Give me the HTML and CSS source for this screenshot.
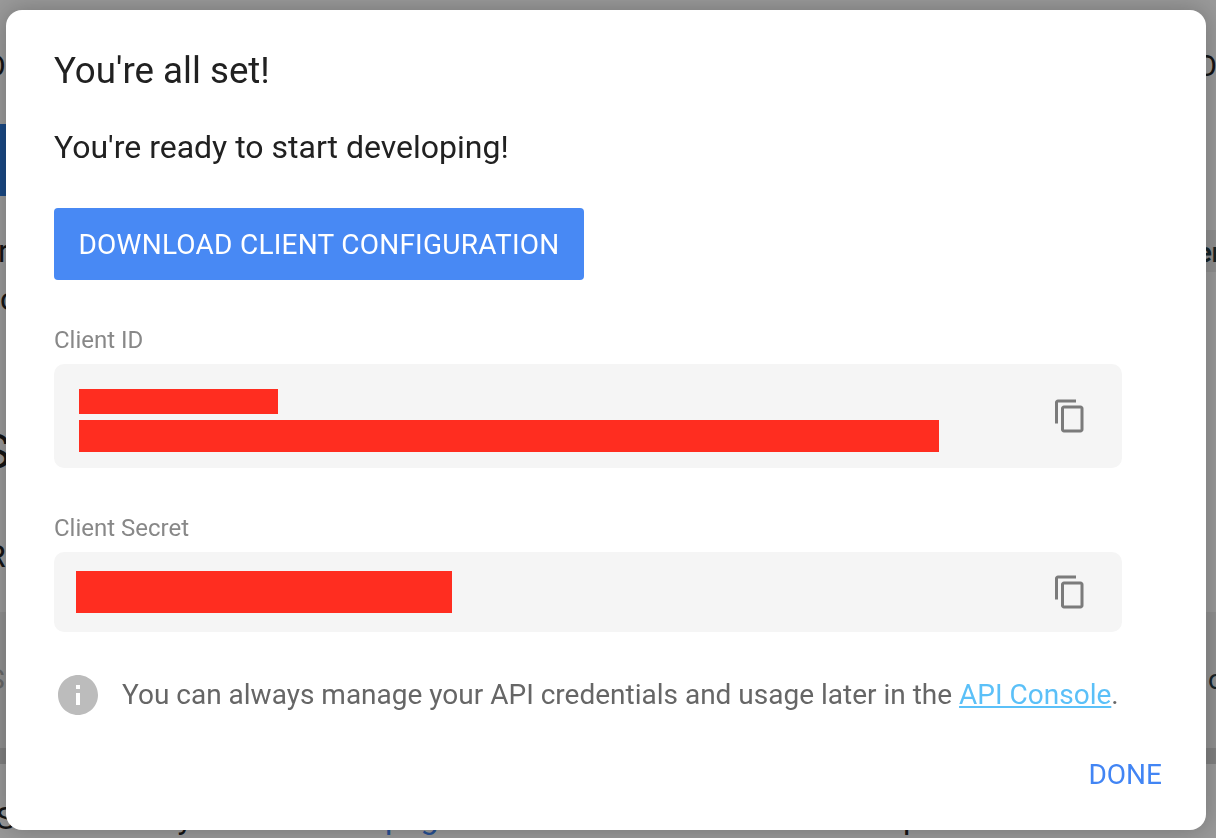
FILE: index.html
```html
<!DOCTYPE html>
<html lang="en">
<head>
<meta charset="utf-8">
<title>You're all set!</title>
<link rel="stylesheet" href="styles.css">
</head>
<body>
<div class="page">
  <div class="row row-top"><span>O</span><span>O</span></div>
  <div class="band"></div>
  <div class="row row-tab"><span>r</span><span class="chip">er</span></div>
  <div class="row row-small"><span>c</span></div>
  <div class="row row-big"><span>S</span></div>
  <div class="row row-r"><span>R</span></div>
  <div class="code">
    <div class="row row-code"><span class="faint">S</span><span class="strong">o</span></div>
    <div class="scrollbar"></div>
  </div>
  <div class="row-bottom"><span>Select the key</span><span class="link">page</span><span>provided</span></div>
</div>
<div class="overlay"></div>
<main class="modal">
  <h1 class="title">You're all set!</h1>
  <p class="subtitle">You're ready to start developing!</p>
  <button class="download">DOWNLOAD CLIENT CONFIGURATION</button>
  <div class="label">Client ID</div>
  <div class="field field-id">
    <div class="redactions">
      <div class="red red-a"></div>
      <div class="red red-b"></div>
    </div>
    <svg class="copy" viewBox="0 0 24 24"><path d="M16 1H4c-1.1 0-2 .9-2 2v14h2V3h12V1zm3 4H8c-1.1 0-2 .9-2 2v14c0 1.1.9 2 2 2h11c1.1 0 2-.9 2-2V7c0-1.1-.9-2-2-2zm0 16H8V7h11v14z"/></svg>
  </div>
  <div class="label">Client Secret</div>
  <div class="field field-secret">
    <div class="red red-c"></div>
    <svg class="copy" viewBox="0 0 24 24"><path d="M16 1H4c-1.1 0-2 .9-2 2v14h2V3h12V1zm3 4H8c-1.1 0-2 .9-2 2v14c0 1.1.9 2 2 2h11c1.1 0 2-.9 2-2V7c0-1.1-.9-2-2-2zm0 16H8V7h11v14z"/></svg>
  </div>
  <div class="note">
    <svg class="info" viewBox="0 0 24 24"><path d="M12 2C6.48 2 2 6.48 2 12s4.48 10 10 10 10-4.48 10-10S17.52 2 12 2zm1 15h-2v-6h2v6zm0-8h-2V7h2v2z"/></svg>
    <p>You can always manage your API credentials and usage later in the <a href="#">API Console</a>.</p>
  </div>
  <div class="actions"><span class="done">DONE</span></div>
</main>
</body>
</html>
```
FILE: styles.css
```css
* { box-sizing: border-box; }
html, body { margin: 0; height: 838px; overflow: hidden; font-family: Roboto, sans-serif; background: #fff; }
.page { height: 838px; overflow: hidden; color: #222; display: flex; flex-direction: column; }
.row { display: flex; justify-content: space-between; white-space: nowrap; flex: none; }
.row-top { height: 124px; font-size: 30px; line-height: 132px; margin: 0 -1px 0 -15px; }
.band { height: 72px; width: 300px; background: #2b79dc; flex: none; }
.row-tab { height: 48px; margin: 31px -16px 0 -2px; font-size: 32px; line-height: 48px; }
.chip { background: #eeeeee; font-weight: 700; color: #263a42; height: 42px; line-height: 45px; padding: 0 10px; margin-top: 3px; font-size: 28px; }
.row-small { height: 48px; font-size: 32px; line-height: 48px; }
.row-big { height: 60px; margin: 99px 0 0 -18px; font-size: 48px; line-height: 60px; }
.row-r { height: 48px; margin: 50px 0 0 -14px; font-size: 32px; line-height: 48px; }
.code { height: 152px; margin-top: 32px; background: #f1f1f1; display: flex; flex-direction: column; flex: none; }
.row-code { height: 40px; margin: 48px -8px 0 -12px; font-size: 28px; line-height: 40px; }
.faint { color: #aaa; }
.strong { color: #263a42; }
.scrollbar { height: 16px; margin-top: auto; background: #d5d5d5; }
.row-bottom { display: grid; grid-template-columns: 389px 518px auto; height: 48px; margin: 30px 0 0 -4px; font-size: 32px; line-height: 48px; white-space: nowrap; flex: none; }
.link { color: #4285f4; }
.overlay { position: fixed; inset: 0; background: rgba(0,0,0,.4); }
.modal { position: fixed; left: 6px; top: 10px; width: 1200px; height: 820px; background: #fff; border-radius: 16px; padding: 41px 48px 0; color: #212121; box-shadow: 0 0 24px rgba(0,0,0,.25); display: flex; flex-direction: column; }
.title { margin: 0; font-size: 36.7px; font-weight: 400; line-height: 40px; }
.subtitle { margin: 36px 0 0; font-size: 32px; line-height: 40px; }
.download { margin-top: 41px; width: 530px; height: 72px; background: #4889f4; color: #fff; border: 0; border-radius: 4px; font: 400 28px Roboto, sans-serif; letter-spacing: .25px; padding: 0; flex: none; }
.label { font-size: 24px; line-height: 28px; color: #888; margin-top: 46px; }
.field { width: 1068px; background: #f5f5f5; border-radius: 10px; display: flex; justify-content: space-between; align-items: center; padding-right: 34px; flex: none; margin-top: 10px; }
.field-id { height: 104px; padding-left: 25px; }
.field-secret { height: 80px; padding-left: 22px; }
.redactions { display: flex; flex-direction: column; gap: 6px; align-self: flex-start; margin-top: 25px; }
.red { background: #ff2d20; }
.red-a { width: 199px; height: 25px; }
.red-b { width: 860px; height: 32px; }
.red-c { width: 376px; height: 42px; }
.copy { width: 36px; height: 36px; fill: #7b7b7b; }
.note { display: flex; align-items: center; gap: 20px; margin-top: 39px; }
.info { width: 48px; height: 48px; fill: #bcbcbc; flex: none; }
.note p { margin: 0 0 2px; font-size: 28px; color: #666; }
.note a { color: #5bc0f8; }
.actions { display: flex; justify-content: flex-end; margin-top: 39px; }
.done { font-size: 28px; color: #4285f4; margin-right: -4px; }
```
